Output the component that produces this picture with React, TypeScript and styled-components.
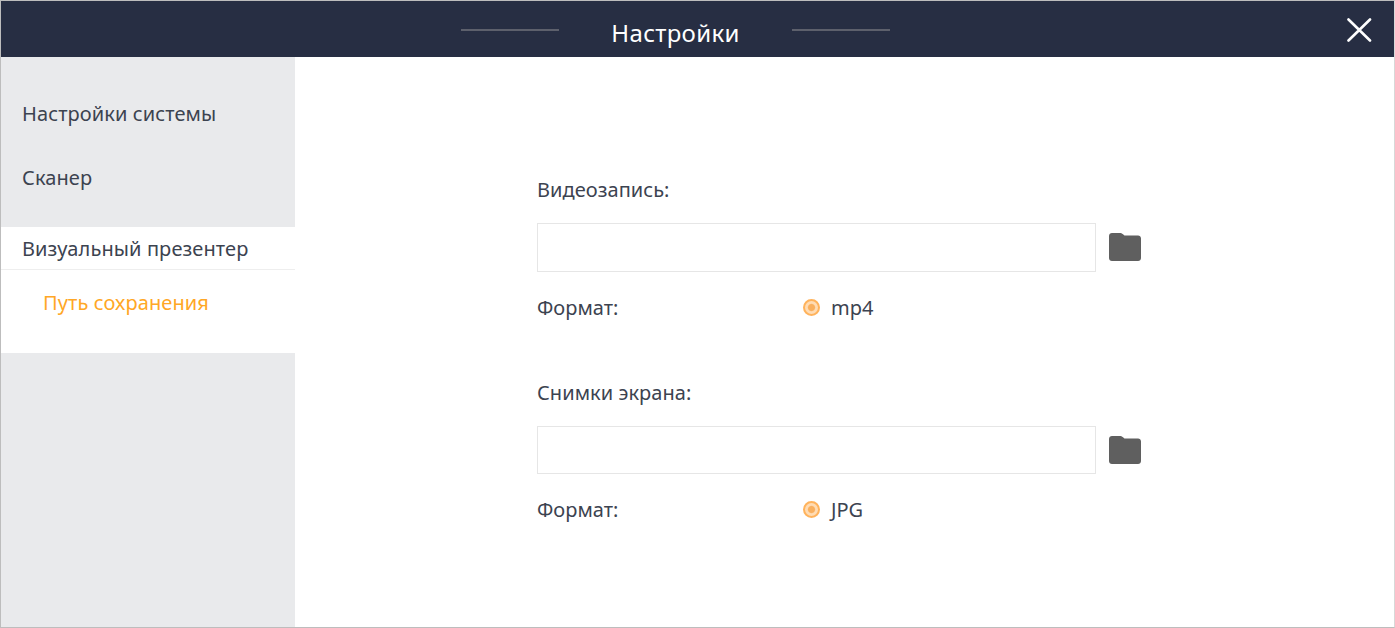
import styled, { createGlobalStyle } from "styled-components";

const GlobalStyle = createGlobalStyle`
  html, body {
    margin: 0;
    padding: 0;
    background: #fff;
    font-family: "Noto Sans", "Open Sans", sans-serif;
  }
`;

const CloseIcon = () => (
  <svg width="26" height="24" viewBox="0 0 26 24">
    <path d="M2.500 1.500 L24 22.500 M24 1.500 L2.500 22.500" stroke="#fff" strokeWidth="2.600" strokeLinecap="round" />
  </svg>
);

const FolderIcon = () => (
  <svg width="32" height="28" viewBox="0 0 32 28">
    <path
      d="M3 0h7.500c1.500 0 2.500.5 3.500 1.300L15.500 2.500H29c1.700 0 3 1.300 3 3V25c0 1.700-1.300 3-3 3H3c-1.700 0-3-1.300-3-3V3c0-1.700 1.300-3 3-3z"
      fill="#5f5f5f"
    />
  </svg>
);

const SaveGroup = (props: { title: string; format: string }) => (
  <Pub.Group>
    <Pub.GroupTitle>{props.title}</Pub.GroupTitle>
    <Pub.PathRow>
      <Pub.PathInput />
      <Pub.FolderButton>
        <FolderIcon />
      </Pub.FolderButton>
    </Pub.PathRow>
    <Pub.FormatRow>
      <Pub.FormatLabel>Формат:</Pub.FormatLabel>
      <Pub.Radio />
      <Pub.RadioText>{props.format}</Pub.RadioText>
    </Pub.FormatRow>
  </Pub.Group>
);

const App = () => {
  return (
    <Pub.Window>
      <GlobalStyle />
      <Pub.Header>
        <Pub.TitleLine />
        <Pub.Title>Настройки</Pub.Title>
        <Pub.TitleLine />
        <Pub.Close>
          <CloseIcon />
        </Pub.Close>
      </Pub.Header>
      <Pub.Body>
        <Pub.Sidebar>
          <Pub.MenuItem>Настройки системы</Pub.MenuItem>
          <Pub.MenuItem>Сканер</Pub.MenuItem>
          <Pub.ActiveBlock>
            <Pub.ActiveTitle>Визуальный презентер</Pub.ActiveTitle>
            <Pub.SubItem>Путь сохранения</Pub.SubItem>
          </Pub.ActiveBlock>
        </Pub.Sidebar>
        <Pub.Main>
          <SaveGroup title="Видеозапись:" format="mp4" />
          <SaveGroup title="Снимки экрана:" format="JPG" />
        </Pub.Main>
      </Pub.Body>
    </Pub.Window>
  );
};

export default App;

const Pub = {
  Window: styled.div`
    box-sizing: border-box;
    width: 1395px;
    height: 628px;
    display: flex;
    flex-direction: column;
    border: 1px solid #bdbdbd;
    border-right-color: #d8d8d8;
    overflow: hidden;
    background: #fff;
  `,
  Header: styled.header`
    position: relative;
    flex: none;
    height: 56px;
    display: flex;
    align-items: center;
    justify-content: center;
    gap: 52px;
    padding-right: 44px;
    background: #272e43;
  `,
  Title: styled.h1`
    margin: 0;
    font-size: 24px;
    font-weight: 400;
    letter-spacing: 0.3px;
    line-height: 30px;
    color: #fff;
    padding-top: 8px;
  `,
  TitleLine: styled.span`
    width: 98px;
    height: 2px;
    margin-top: 2px;
    background: #5d606c;
  `,
  Close: styled.button`
    position: absolute;
    top: 17px;
    right: 22px;
    width: 26px;
    height: 24px;
    padding: 0;
    display: flex;
    border: 0;
    background: none;
  `,
  Body: styled.div`
    flex: 1;
    display: flex;
    min-height: 0;
  `,
  Sidebar: styled.nav`
    flex: none;
    width: 294px;
    padding-top: 25px;
    background: #e9eaec;
  `,
  MenuItem: styled.div`
    height: 64px;
    padding-left: 21px;
    font-size: 20px;
    letter-spacing: 0.1px;
    line-height: 64px;
    color: #3c4350;
  `,
  ActiveBlock: styled.div`
    height: 126px;
    margin-top: 17px;
    background: #fff;
  `,
  ActiveTitle: styled.div`
    height: 42px;
    padding-left: 21px;
    font-size: 20px;
    letter-spacing: 0.1px;
    line-height: 44px;
    color: #3c4350;
    border-bottom: 1px solid #eeeeee;
  `,
  SubItem: styled.div`
    padding-left: 42px;
    font-size: 20px;
    letter-spacing: 0.1px;
    line-height: 65px;
    color: #ffa726;
  `,
  Main: styled.main`
    flex: 1;
    padding: 118px 0 0 242px;
  `,
  Group: styled.section`
    height: 202.5px;
  `,
  GroupTitle: styled.div`
    font-size: 20px;
    letter-spacing: 0.05px;
    line-height: 30px;
    color: #3c4350;
    margin-bottom: 18px;
  `,
  PathRow: styled.div`
    display: flex;
    align-items: center;
    gap: 13px;
  `,
  PathInput: styled.div`
    box-sizing: border-box;
    width: 559px;
    height: 48.5px;
    border: 1px solid #e6e6e6;
    background: #fff;
  `,
  FolderButton: styled.span`
    display: flex;
    width: 32px;
    height: 28px;
  `,
  FormatRow: styled.div`
    display: flex;
    align-items: center;
    height: 30px;
    margin-top: 20.5px;
    font-size: 20px;
    color: #3c4350;
  `,
  FormatLabel: styled.span`
    width: 266px;
  `,
  Radio: styled.span`
    box-sizing: border-box;
    width: 17px;
    height: 17px;
    border-radius: 50%;
    border: 2.5px solid #ffb35c;
    background: radial-gradient(circle, #f9b05f 0 3px, #ffdcb4 4.2px);
  `,
  RadioText: styled.span`
    margin-left: 11px;
  `,
};
